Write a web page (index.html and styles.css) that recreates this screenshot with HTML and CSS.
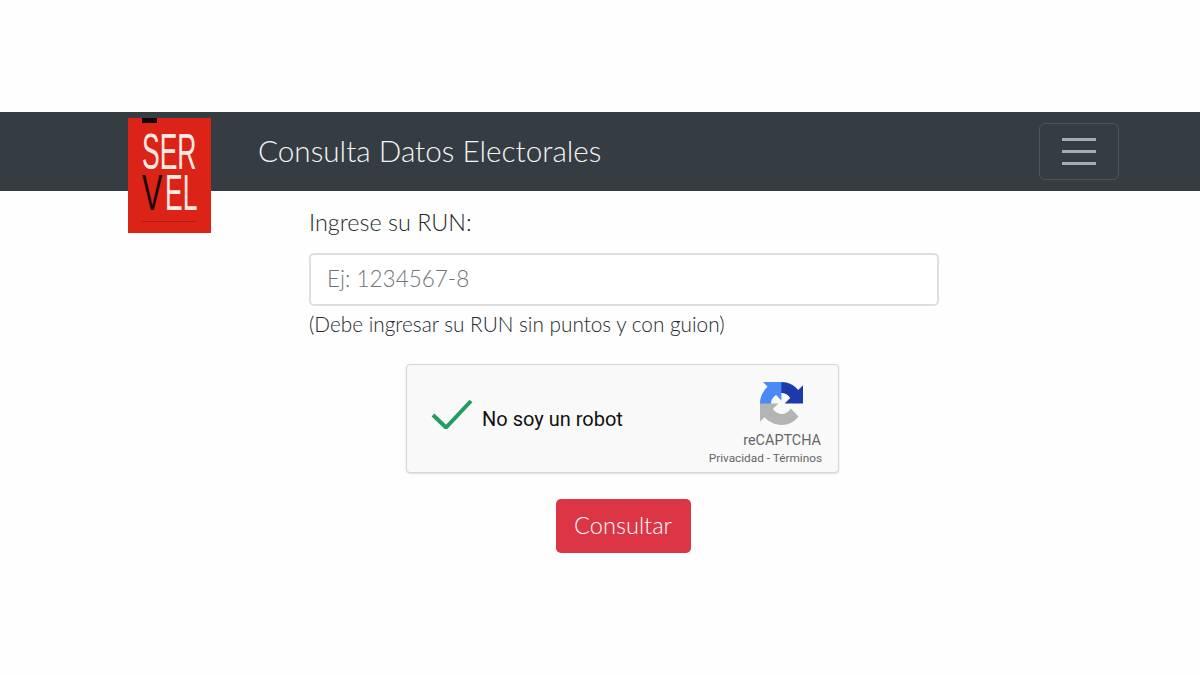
FILE: index.html
```html
<!DOCTYPE html>
<html lang="es">
<head>
  <meta charset="UTF-8" />
  <meta name="viewport" content="width=device-width, initial-scale=1.0" />
  <title>Consulta Datos Electorales</title>
  <link rel="stylesheet" href="styles.css">
</head>
<body>
  <nav class="navbar">
    <a class="brand" href="#">
      <svg class="logo" viewBox="0 0 83 115" width="83" height="115">
        <rect width="83" height="115" fill="#db2417" />
        <rect x="14" y="0" width="15" height="5" fill="#120504" />
        <text class="logo-text" transform="translate(14 51) scale(0.53 1)" fill="#fbe9e4">SER</text>
        <text class="logo-text" transform="translate(14 92) scale(0.61 1)" fill="#1c0403">V</text>
        <text class="logo-text" transform="translate(37 92) scale(0.53 1)" fill="#fbe9e4">EL</text>
        <rect x="14" y="103" width="54" height="1" fill="#a81c12" />
      </svg>
    </a>
    <span class="nav-title">Consulta Datos Electorales</span>
    <button class="toggler" type="button" aria-label="Menu">
      <span></span><span></span><span></span>
    </button>
  </nav>

  <form class="run-form">
    <label class="run-label" for="run">Ingrese su RUN:</label>
    <input class="run-input" type="text" id="run" placeholder="Ej: 1234567-8" />
    <p class="run-help">(Debe ingresar su RUN sin puntos y con guion)</p>

    <div class="captcha">
      <svg class="check" viewBox="0 0 42 30" width="42" height="30">
        <path d="M2 16 L15 28.500 L40 2" fill="none" stroke="#1f9d62" stroke-width="4" />
      </svg>
      <span class="captcha-text">No soy un robot</span>
      <div class="captcha-brand">
        <svg class="captcha-logo" viewBox="0 0 64 64" width="43" height="43">
          <path fill="#1c3aa9" d="M64 31.955l-.033-1.37V4.687l-7.16 7.16C50.948 4.674 42.033.093 32.05.093c-10.4 0-19.622 4.96-25.458 12.64l11.736 11.86a15.55 15.55 0 0 1 4.754-5.334c2.05-1.6 4.952-2.906 8.968-2.906.485 0 .86.057 1.136.163 4.976.393 9.29 3.14 11.83 7.124l-8.307 8.307c10.522-.04 22.4-.066 27.29.005" />
          <path fill="#4a8af4" d="M31.862.094l-1.37.033H4.594l7.16 7.16C4.58 13.147 0 22.06 0 32.046c0 10.4 4.96 19.622 12.64 25.458l11.86-11.736a15.55 15.55 0 0 1-5.334-4.754c-1.6-2.05-2.906-4.952-2.906-8.968 0-.485.057-.86.163-1.136.393-4.976 3.14-9.29 7.124-11.83l8.307 8.307c-.04-10.522-.066-22.4.005-27.29" />
          <path fill="#b4b4b4" d="M.001 32.045l.033 1.37v25.898l7.16-7.16c5.86 7.173 14.774 11.754 24.76 11.754 10.4 0 19.622-4.96 25.458-12.64l-11.736-11.86a15.55 15.55 0 0 1-4.754 5.334c-2.05 1.6-4.952 2.906-8.968 2.906-.485 0-.86-.057-1.136-.163-4.976-.393-9.29-3.14-11.83-7.124l8.307-8.307c-10.522.04-22.4.066-27.29-.005" />
        </svg>
        <span class="captcha-name">reCAPTCHA</span>
        <span class="captcha-links">Privacidad - Términos</span>
      </div>
    </div>

    <button class="submit-btn" type="submit">Consultar</button>
  </form>
</body>
</html>
```

FILE: styles.css
```css
body {
  margin: 0;
  padding-top: 112px;
  background: #fefefe;
  font-family: Lato, "Open Sans", sans-serif;
  font-weight: 300;
  color: #23282d;
}
.navbar {
  position: relative;
  display: flex;
  align-items: center;
  height: 79px;
  padding: 0 81px 0 258px;
  background: #363d42;
}
.logo {
  position: absolute;
  left: 128px;
  top: 6px;
  display: block;
}
.logo-text {
  font-family: "Liberation Sans", sans-serif;
  font-size: 50px;
}
.nav-title {
  flex: 1;
  padding-bottom: 3px;
  font-size: 29.700px;
  color: #f4f5f5;
}
.toggler {
  display: flex;
  flex-direction: column;
  align-items: center;
  justify-content: center;
  gap: 9px;
  width: 80px;
  height: 57px;
  padding: 0;
  background: transparent;
  border: 1px solid #4f565b;
  border-radius: 6px;
}
.toggler span {
  width: 34px;
  height: 3px;
  background: #a9acaf;
}
.run-form {
  display: flex;
  flex-direction: column;
  width: 630px;
  margin-left: 309px;
  padding-top: 16px;
}
.run-label {
  font-size: 23.400px;
  line-height: 30px;
}
.run-input {
  box-sizing: border-box;
  width: 100%;
  height: 53px;
  margin-top: 16px;
  padding: 0 16px 3px;
  background: #fff;
  border: 2px solid #dcdfe2;
  border-radius: 5px;
  font-family: inherit;
  font-weight: 300;
  font-size: 22.500px;
  color: #343a40;
}
.run-input::placeholder {
  color: #6f757b;
  opacity: 1;
}
.run-help {
  margin: 4px 0 0;
  font-size: 20.750px;
  line-height: 28px;
}
.captcha {
  box-sizing: border-box;
  display: flex;
  align-items: center;
  align-self: center;
  width: 433px;
  height: 109px;
  margin-top: 26px;
  margin-left: -3px;
  padding: 0 16px 0 24px;
  background: #f9f9f9;
  border: 1px solid #d5d5d5;
  border-radius: 4px;
  box-shadow: 0 1px 2px rgba(0, 0, 0, 0.12);
}
.check {
  flex: none;
  margin-top: -10px;
}
.captcha-text {
  flex: 1;
  margin-left: 9px;
  font-family: Roboto, "Liberation Sans", sans-serif;
  font-weight: 400;
  font-size: 20px;
  color: #111;
}
.captcha-brand {
  display: flex;
  flex-direction: column;
  align-items: flex-end;
  padding-top: 11px;
  font-family: Roboto, "Liberation Sans", sans-serif;
  font-weight: 400;
  color: #666;
}
.captcha-logo {
  margin-right: 19px;
  margin-bottom: 7px;
}
.captcha-name {
  margin-right: 1px;
  font-size: 14.400px;
  line-height: 18px;
}
.captcha-links {
  font-size: 11.800px;
  line-height: 16px;
}
.submit-btn {
  align-self: center;
  width: 135px;
  height: 54px;
  margin-top: 26px;
  margin-left: -2px;
  padding-bottom: 3px;
  background: #dc3545;
  border: none;
  border-radius: 5px;
  font-family: inherit;
  font-weight: 300;
  font-size: 23.600px;
  color: #fff;
}
```
